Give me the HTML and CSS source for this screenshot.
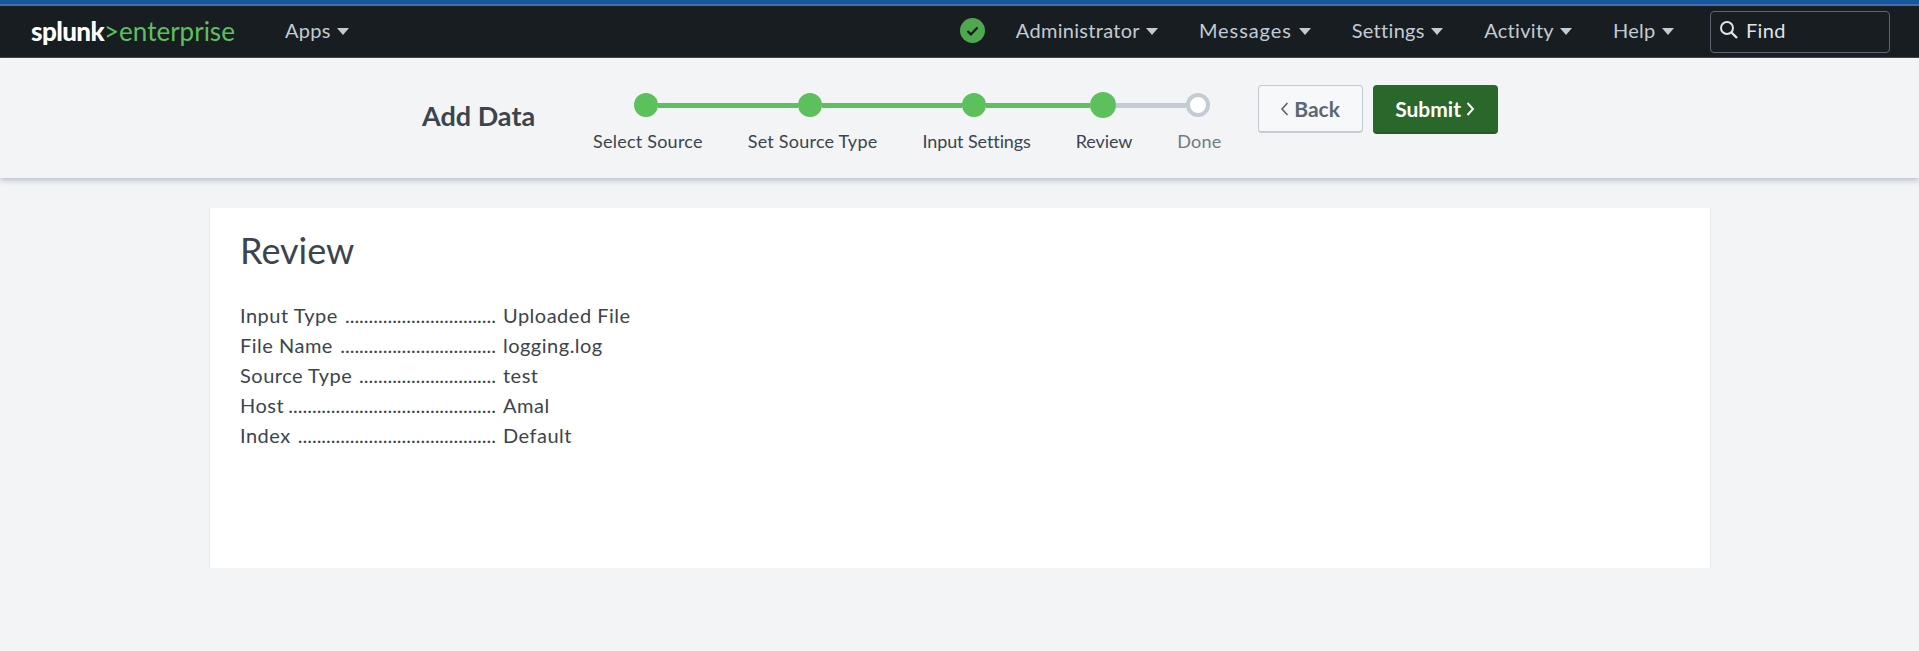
FILE: index.html
```html
<!DOCTYPE html>
<html lang="en">
<head>
<meta charset="UTF-8">
<title>Add Data - Splunk</title>
<link rel="stylesheet" href="styles.css">
</head>
<body>
<nav class="topbar">
    <div class="nav-left">
        <a class="logo"><span class="logo-brand">splunk</span><span class="logo-product">&gt;enterprise</span></a>
        <a class="nav-item">Apps <span class="caret"></span></a>
    </div>
    <div class="nav-right">
        <svg class="status-icon" width="25" height="25" viewBox="0 0 25 25">
            <circle cx="12.5" cy="12.5" r="12.5" fill="#4fa84f"/>
            <path d="M7.5 13l3.4 3.4 6.6-7" fill="none" stroke="#14191c" stroke-width="2.2"/>
        </svg>
        <a class="nav-item">Administrator <span class="caret"></span></a>
        <a class="nav-item nav-wide">Messages <span class="caret"></span></a>
        <a class="nav-item">Settings <span class="caret"></span></a>
        <a class="nav-item">Activity <span class="caret"></span></a>
        <a class="nav-item">Help <span class="caret"></span></a>
        <div class="find">
            <svg width="20" height="20" viewBox="0 0 20 20">
                <circle cx="8" cy="8" r="6" fill="none" stroke="#dfe4e8" stroke-width="2"/>
                <path d="M12.5 12.5l5.5 5.5" stroke="#dfe4e8" stroke-width="2.4"/>
            </svg>
            <span>Find</span>
        </div>
    </div>
</nav>

<header class="stepbar">
    <h2 class="stepbar-title">Add Data</h2>
    <div class="steps">
        <div class="track">
            <span class="dot"></span><span class="seg seg-a"></span>
            <span class="dot"></span><span class="seg seg-a"></span>
            <span class="dot"></span><span class="seg seg-b"></span>
            <span class="dot dot-current"></span><span class="seg seg-c"></span>
            <span class="dot dot-todo"></span>
        </div>
        <div class="step-labels">
            <span>Select Source</span>
            <span>Set Source Type</span>
            <span class="tight">Input Settings</span>
            <span class="tight">Review</span>
            <span class="todo">Done</span>
        </div>
    </div>
    <div class="actions">
        <button class="btn btn-back" type="button">
            <svg width="9" height="16" viewBox="0 0 9 16"><path d="M7.5 2L2 8l5.5 6" fill="none" stroke="#5c6773" stroke-width="1.7"/></svg>
            Back
        </button>
        <button class="btn btn-submit" type="button">
            Submit
            <svg width="9" height="16" viewBox="0 0 9 16"><path d="M1.5 2L7 8l-5.5 6" fill="none" stroke="#fff" stroke-width="1.9"/></svg>
        </button>
    </div>
</header>

<main class="card">
    <h1>Review</h1>
    <div class="review-list">
        <div class="row"><div class="key"><span>Input Type</span><span class="dots">................................</span></div><span>Uploaded File</span></div>
        <div class="row"><div class="key"><span>File Name</span><span class="dots">.................................</span></div><span>logging.log</span></div>
        <div class="row"><div class="key"><span>Source Type</span><span class="dots">.............................</span></div><span>test</span></div>
        <div class="row"><div class="key"><span>Host</span><span class="dots">............................................</span></div><span>Amal</span></div>
        <div class="row"><div class="key"><span>Index</span><span class="dots">..........................................</span></div><span>Default</span></div>
    </div>
</main>
</body>
</html>
```

FILE: styles.css
```css
body {
    font-family: Lato, "Open Sans", sans-serif;
    background-color: #f2f4f5;
    color: #3c444d;
    margin: 0;
    padding: 0;
}

.topbar {
    height: 53px;
    display: flex;
    justify-content: space-between;
    align-items: center;
    background-color: #171d21;
    border-top: 4px solid #17559f;
    border-bottom: 1px solid #3c444d;
    box-shadow: inset 0 2px 0 #3f72ad;
    color: #c3cbd4;
    font-size: 20px;
    letter-spacing: 0.3px;
}

.nav-left, .nav-right {
    display: flex;
    align-items: center;
}

.nav-left {
    margin-left: 31px;
}

.nav-right {
    margin-right: 29px;
    gap: 41px;
}

.logo {
    width: 254px;
    font-size: 26px;
    letter-spacing: 0;
    white-space: nowrap;
}

.logo-brand {
    color: #fff;
    font-weight: 900;
    letter-spacing: -0.6px;
}

.logo-product {
    color: #5cc05c;
}

.nav-item {
    margin-top: -2px;
    white-space: nowrap;
}

.nav-wide {
    letter-spacing: 0.9px;
}

.caret {
    display: inline-block;
    width: 0;
    height: 0;
    margin-left: 1px;
    vertical-align: 3px;
    border-left: 6px solid transparent;
    border-right: 6px solid transparent;
    border-top: 7px solid #c3cbd4;
}

.status-icon {
    margin-right: -10px;
}

.find {
    box-sizing: border-box;
    width: 180px;
    height: 42px;
    margin: 3px 0 0 -5px;
    padding: 0 0 4px 8px;
    display: flex;
    align-items: center;
    gap: 7px;
    border: 1px solid #5c6773;
    border-radius: 4px;
    color: #dfe4e8;
}

.stepbar {
    height: 120px;
    display: flex;
    align-items: flex-start;
    background-color: #f2f4f5;
    box-shadow: 0 2px 6px rgba(60, 80, 110, 0.35);
}

.stepbar-title {
    margin: 43px 0 0 422px;
    width: 171px;
    font-size: 27px;
    font-weight: 700;
    line-height: 30px;
}

.steps {
    margin-top: 35px;
}

.track {
    display: flex;
    align-items: center;
    margin-left: 41px;
    height: 24px;
}

.dot {
    flex: none;
    width: 24px;
    height: 24px;
    border-radius: 50%;
    background-color: #5cc05c;
}

.dot-current {
    width: 26px;
    height: 26px;
}

.dot-todo {
    box-sizing: border-box;
    background-color: #fff;
    border: 4px solid #c3cbd4;
}

.seg {
    flex: none;
    height: 5px;
    background-color: #5cc05c;
}

.seg-a { width: 140px; }
.seg-b { width: 104px; }
.seg-c { width: 70px; background-color: #c3cbd4; }

.step-labels {
    display: flex;
    gap: 45px;
    margin-top: 12px;
    font-size: 18px;
    line-height: 24px;
    letter-spacing: 0.23px;
    white-space: nowrap;
}

.tight {
    letter-spacing: -0.1px;
}

.todo {
    color: #6f7a87;
}

.actions {
    display: flex;
    gap: 10px;
    margin: 27px 0 0 36px;
}

.btn {
    box-sizing: border-box;
    height: 48px;
    display: flex;
    align-items: center;
    justify-content: center;
    gap: 5px;
    font-family: inherit;
    font-size: 21px;
    border-radius: 4px;
    cursor: pointer;
}

.btn-back {
    width: 105px;
    color: #5c6773;
    font-weight: 700;
    background-color: #f7f8fa;
    border: 1px solid #c3cbd4;
    border-bottom-width: 2px;
}

.btn-submit {
    width: 125px;
    height: 49px;
    color: #fff;
    font-weight: 700;
    background-color: #2a672a;
    border: none;
    border-bottom: 2px solid #255c25;
}

.card {
    box-sizing: border-box;
    width: 1500px;
    height: 360px;
    margin: 30px 0 0 210px;
    padding: 20px 30px;
    background-color: #fff;
    box-shadow: 0 1px 2px rgba(60, 80, 110, 0.15);
}

.card h1 {
    margin: 0;
    font-size: 36px;
    font-weight: 400;
    line-height: 44px;
}

.review-list {
    margin-top: 28px;
    font-size: 20px;
    line-height: 30px;
    letter-spacing: 0.5px;
}

.row {
    display: flex;
    gap: 7px;
}

.key {
    width: 256px;
    display: flex;
    justify-content: space-between;
    white-space: nowrap;
    overflow: hidden;
}

.dots {
    letter-spacing: 0;
}
```
